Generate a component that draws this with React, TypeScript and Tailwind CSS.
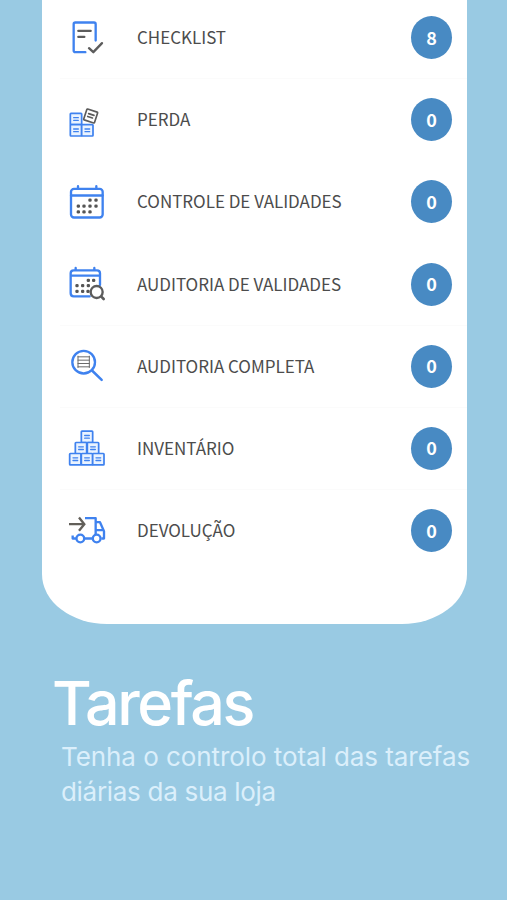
import type { ReactNode } from "react";

type Task = {
  label: string;
  count: number;
  icon: ReactNode;
  divider: boolean;
};

const Icon = ({ viewBox, children }: { viewBox: string; children: ReactNode }) => (
  <svg
    viewBox={viewBox}
    className="mt-px h-[55px] w-[60px] shrink-0 fill-none stroke-[#3f82ef]"
    strokeWidth={7}
    strokeLinecap="round"
    strokeLinejoin="round"
  >
    {children}
  </svg>
);

const Box = ({ x, y }: { x: number; y: number }) => (
  <g strokeWidth={5.2}>
    <rect x={x} y={y} width={34} height={34} rx={2} className="fill-[#eaf3ff]" />
    <path d={`M${x + 10} ${y + 13}h14M${x + 10} ${y + 21}h14`} strokeWidth={4} />
  </g>
);

const Dots = ({ points }: { points: number[][] }) => (
  <g className="fill-[#555] stroke-none">
    {points.map(([x, y]) => (
      <rect key={`${x}-${y}`} x={x - 5} y={y - 5} width={10} height={10} rx={4} />
    ))}
  </g>
);

const ChecklistIcon = () => (
  <Icon viewBox="0 1.5 180 165">
    <path d="M76 125H46q-5 0-5-5V41q0-5 5-5h56q5 0 5 5v49" />
    <g className="stroke-[#5c5c5c]">
      <path d="M55 61h37M55 79h18" />
      <path d="M87 113l13 12 26-27" />
    </g>
  </Icon>
);

const LossIcon = () => (
  <Icon viewBox="0 -7 180 165">
    <Box x={31} y={54} />
    <Box x={31} y={88} />
    <Box x={65} y={88} />
    <g className="stroke-[#5c5c5c]" strokeWidth={5} transform="rotate(18 92 62)">
      <rect x={75} y={45} width={34} height={34} rx={2} className="fill-white" />
      <path d="M84 57h17M84 66h15" />
    </g>
  </Icon>
);

const CalendarIcon = () => (
  <Icon viewBox="0 -.5 180 165">
    <rect x={33} y={41} width={95} height={86} rx={9} />
    <path d="M33 61h95M54 33v8M109 33v8" />
    <Dots
      points={[
        [90, 75], [108, 75],
        [55, 93], [72, 93], [90, 93], [108, 93],
        [55, 110], [72, 110], [90, 110],
      ]}
    />
  </Icon>
);

const CalendarSearchIcon = () => (
  <Icon viewBox="0 -3 180 165">
    <path d="M89 115H41q-9 0-9-9V46q0-9 9-9h70q9 0 9 9v35M32 53h88M47 30v7M103 30v7" />
    <Dots
      points={[
        [85, 67], [101, 67],
        [51, 83], [68, 83], [85, 83],
        [51, 100], [68, 100], [84, 100],
      ]}
    />
    <g className="stroke-[#5c5c5c]">
      <circle cx={110} cy={102} r={18} className="fill-white" />
      <path d="M124 116l7 7" strokeWidth={8} />
    </g>
  </Icon>
);

const SearchIcon = () => (
  <Icon viewBox="0 -2.5 180 165">
    <circle cx={71} cy={67} r={34} />
    <path d="M96 92l29 28" strokeWidth={7.5} />
    <g className="stroke-[#6b6b6b]" strokeWidth={3}>
      <path d="M54 49v34M88 49v34M54 51h34M54 61h34M54 71h34M54 81h34" />
    </g>
  </Icon>
);

const InventoryIcon = () => (
  <Icon viewBox="0 -2.5 180 165">
    <Box x={64} y={28} />
    <Box x={46} y={62} />
    <Box x={82} y={62} />
    <Box x={29} y={95} />
    <Box x={64} y={95} />
    <Box x={98} y={95} />
  </Icon>
);

const ReturnIcon = () => (
  <Icon viewBox="0 -4.5 180 165">
    <path
      d="M75 38h32v61M107 50h13l12 27v22h-8M107 74h24M98 99H72M49 99H38v-9"
      strokeLinecap="butt"
    />
    <circle cx={61} cy={99} r={11.5} />
    <circle cx={110} cy={99} r={11.5} className="fill-white" />
    <path
      d="M27 56h45M57 36l16 20-16 20"
      className="stroke-[#625f59]"
      strokeLinecap="butt"
      strokeLinejoin="miter"
    />
  </Icon>
);

const tasks: Task[] = [
  { label: "CHECKLIST", count: 8, icon: <ChecklistIcon />, divider: true },
  { label: "PERDA", count: 0, icon: <LossIcon />, divider: false },
  { label: "CONTROLE DE VALIDADES", count: 0, icon: <CalendarIcon />, divider: false },
  { label: "AUDITORIA DE VALIDADES", count: 0, icon: <CalendarSearchIcon />, divider: true },
  { label: "AUDITORIA COMPLETA", count: 0, icon: <SearchIcon />, divider: true },
  { label: "INVENTÁRIO", count: 0, icon: <InventoryIcon />, divider: true },
  { label: "DEVOLUÇÃO", count: 0, icon: <ReturnIcon />, divider: false },
];

const TaskRow = ({ task }: { task: Task }) => (
  <li
    className={`ml-[18px] flex h-[82.17px] items-center border-b pr-[15px] ${
      task.divider ? "border-[#fbfbfb]" : "border-transparent"
    }`}
  >
    {task.icon}
    <span className="-mt-0.5 ml-[17px] flex-1 text-[17px] leading-none tracking-[-0.02px] whitespace-nowrap text-[#4c4c4c]">
      {task.label}
    </span>
    <span className="flex h-[43px] w-[41px] items-center justify-center rounded-[50%] bg-[#488ac3] pb-0.5 text-[18px] leading-none font-bold text-white">
      {task.count}
    </span>
  </li>
);

const App = () => {
  return (
    <div className="h-[900px] w-[507px] overflow-hidden bg-[#99cae3]">
      <ul className="-mt-[3px] ml-[42px] h-[627px] w-[425px] bg-white font-['Noto_Sans_CJK_SC',sans-serif] [border-bottom-left-radius:65px_50px] [border-bottom-right-radius:65px_50px]">
        {tasks.map((task) => (
          <TaskRow key={task.label} task={task} />
        ))}
      </ul>

      <div className="font-[Inter,sans-serif]">
        <h1 className="mt-[47px] ml-[52px] text-[61px] leading-[64px] font-medium tracking-[-2.4px] text-white">
          Tarefas
        </h1>
        <p className="mt-[4px] ml-[61px] text-[26px] leading-[35px] whitespace-nowrap text-[#dbeffb]">
          <span className="block tracking-[-0.07px]">Tenha o controlo total das tarefas</span>
          <span className="block tracking-[-0.3px]">diárias da sua loja</span>
        </p>
      </div>
    </div>
  );
};

export default App;
